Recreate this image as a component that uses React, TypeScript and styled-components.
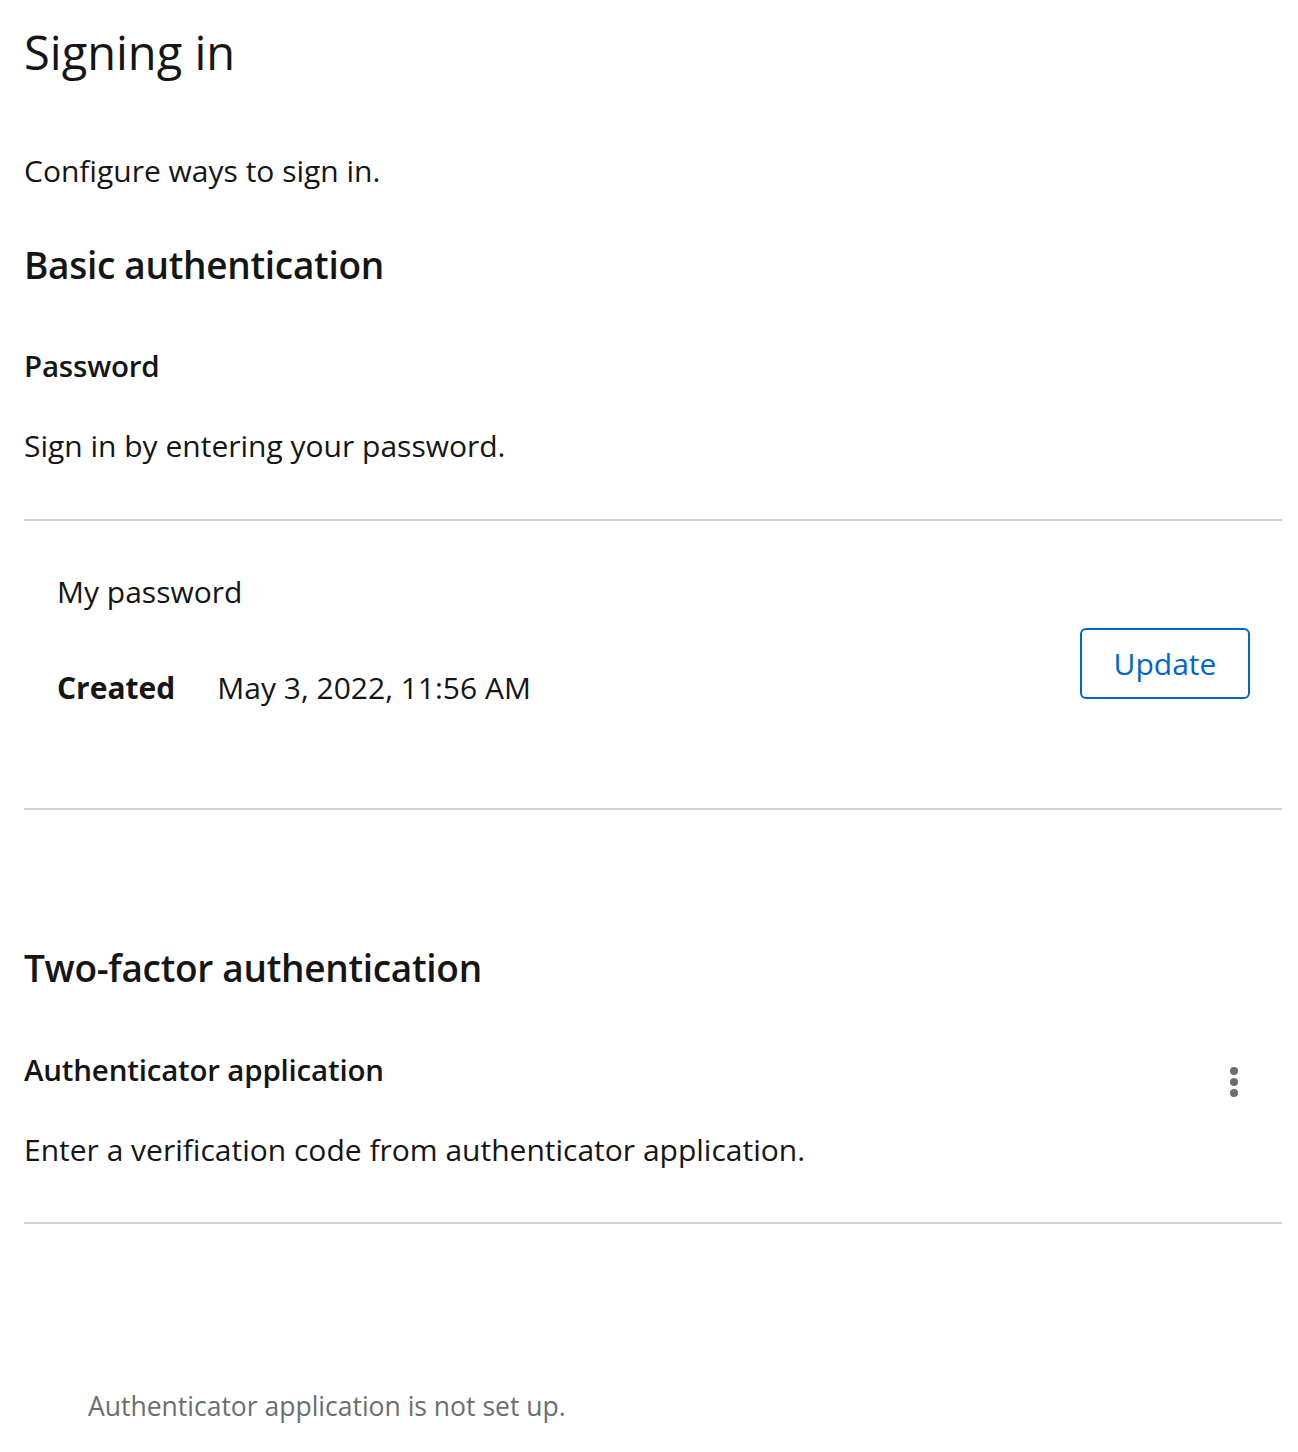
import React from 'react';
import styled, { createGlobalStyle } from 'styled-components';

const GlobalStyle = createGlobalStyle`
    html, body {
        margin: 0;
        padding: 0;
        background: #ffffff;
    }
    body {
        font-family: "Open Sans", "Liberation Sans", sans-serif;
        color: #151515;
    }
`;

const Page = styled.main`
    display: flex;
    flex-direction: column;
    padding: 0 16px 40px 24px;
`;

const Title = styled.h1`
    margin: 23px 0 0;
    font-size: 47px;
    line-height: 58px;
    font-weight: 400;
`;

const Lead = styled.p<{ $top: number }>`
    margin: ${(p) => p.$top}px 0 0;
    font-size: 30px;
    line-height: 40px;
`;

const SectionTitle = styled.h2<{ $top: number }>`
    margin: ${(p) => p.$top}px 0 0;
    font-size: 37px;
    line-height: 44px;
    font-weight: 600;
    letter-spacing: -0.3px;
`;

const SubTitle = styled.h3`
    margin: 0;
    font-size: 29.5px;
    line-height: 40px;
    font-weight: 600;
    letter-spacing: -0.2px;
`;

const Divider = styled.hr<{ $top: number }>`
    margin: ${(p) => p.$top}px 0 0;
    border: none;
    height: 2px;
    background: #d2d2d2;
`;

const CredentialRow = styled.div`
    display: flex;
    justify-content: space-between;
    align-items: flex-start;
    padding: 51px 32px 100px 33px;
`;

const CredentialInfo = styled.div`
    display: flex;
    flex-direction: column;
    gap: 56px;
    font-size: 30px;
    line-height: 40px;
`;

const Meta = styled.div`
    display: flex;
    gap: 42px;
`;

const MetaLabel = styled.span`
    font-weight: 700;
`;

const OutlineButton = styled.button`
    margin-top: 56px;
    width: 170px;
    height: 71px;
    border: 2px solid #0066cc;
    border-radius: 6px;
    background: #ffffff;
    color: #0066cc;
    font-family: inherit;
    font-size: 30px;
    cursor: pointer;
`;

const HeaderRow = styled.div`
    display: flex;
    justify-content: space-between;
    align-items: flex-start;
    height: 40px;
    margin-top: 60px;
`;

const Kebab = styled.button`
    display: flex;
    flex-direction: column;
    align-items: center;
    gap: 3px;
    margin: 17px 44px 0 0;
    padding: 0;
    border: none;
    background: none;
    cursor: pointer;
`;

const Dot = styled.span`
    width: 8px;
    height: 8px;
    border-radius: 50%;
    background: #6a6e73;
`;

const EmptyNote = styled.p`
    margin: 164px 0 0;
    padding-left: 64px;
    font-size: 26.5px;
    line-height: 36px;
    color: #6a6e73;
`;

export default function App() {
    return (
        <>
            <GlobalStyle />
            <Page>
                <Title>Signing in</Title>
                <Lead $top={70}>Configure ways to sign in.</Lead>

                <SectionTitle $top={52}>Basic authentication</SectionTitle>
                <Lead as="div" $top={59}>
                    <SubTitle>Password</SubTitle>
                </Lead>
                <Lead $top={40}>Sign in by entering your password.</Lead>
                <Divider $top={53} />
                <CredentialRow>
                    <CredentialInfo>
                        <span>My password</span>
                        <Meta>
                            <MetaLabel>Created</MetaLabel>
                            <span>May 3, 2022, 11:56 AM</span>
                        </Meta>
                    </CredentialInfo>
                    <OutlineButton>Update</OutlineButton>
                </CredentialRow>
                <Divider $top={0} />

                <SectionTitle $top={136}>Two-factor authentication</SectionTitle>
                <HeaderRow>
                    <SubTitle>Authenticator application</SubTitle>
                    <Kebab aria-label="Actions">
                        <Dot />
                        <Dot />
                        <Dot />
                    </Kebab>
                </HeaderRow>
                <Lead $top={40}>Enter a verification code from authenticator application.</Lead>
                <Divider $top={52} />
                <EmptyNote>Authenticator application is not set up.</EmptyNote>
            </Page>
        </>
    );
}
